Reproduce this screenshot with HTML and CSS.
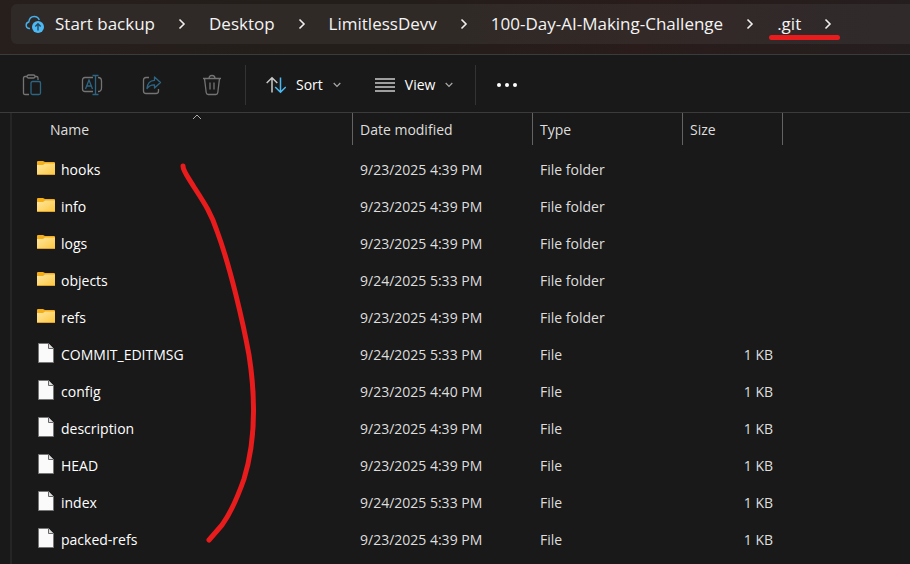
FILE: index.html
```
<!DOCTYPE html>
<html lang="en">
<head>
<meta charset="utf-8">
<title>.git</title>
<link rel="stylesheet" href="styles.css">
</head>
<body>
<svg class="defs" aria-hidden="true">
  <defs>
    <linearGradient id="folder-fill" x1="0" y1="0" x2="1" y2="1">
      <stop offset="0" stop-color="#ffe7a0"/><stop offset="1" stop-color="#fdc73f"/>
    </linearGradient>
    <symbol id="folder" viewBox="0 0 18 14">
      <path d="M0 1Q0 0 1 0H6L8 1H17Q18 1 18 2V13H0Z" fill="#f5ad18"/>
      <path d="M0 4H6L8 2.500H18V13Q18 14 17 14H1Q0 14 0 13Z" fill="url(#folder-fill)"/>
      <path d="M0 13.500H18" stroke="#e0a42c"/>
    </symbol>
    <symbol id="file" viewBox="0 0 16 20">
      <path d="M.5.5H10.500L15.500 5.500V19.500H.5Z" fill="#fafafa" stroke="#777"/>
      <path d="M10.500.5V5.500H15.500" fill="#ddd" stroke="#666"/>
    </symbol>
    <symbol id="chevron" viewBox="0 0 8 12"><path d="M1.500 1.500L6 6L1.500 10.500" fill="none" stroke="#eee" stroke-width="1.600"/></symbol>
    <symbol id="down" viewBox="0 0 8 6"><path d="M.7 1L4 4.300L7.300 1" fill="none" stroke="#aaa" stroke-width="1.200"/></symbol>
  </defs>
</svg>
<header class="address">
  <nav class="path" aria-label="Path">
    <a class="backup" href="#">
      <svg width="20" height="19" viewBox="0 0 20 19" fill="none"><path d="M5 13.500H4A3.300 3.300 0 0 1 3.800 7Q4.500 1.500 9.200 1.500Q13 1.500 14.300 5" stroke="#45b0ee" stroke-width="1.400"/><circle cx="13" cy="12" r="6" fill="#4cb9f4"/><path d="M13 15.500V9M10.300 11.500L13 8.800L15.700 11.500" stroke="#25465a" stroke-width="1.400"/></svg>
      Start backup</a>
    <svg class="chev"><use href="#chevron"/></svg>
    <a href="#">Desktop</a>
    <svg class="chev"><use href="#chevron"/></svg>
    <a href="#">LimitlessDevv</a>
    <svg class="chev"><use href="#chevron"/></svg>
    <a href="#">100-Day-AI-Making-Challenge</a>
    <svg class="chev"><use href="#chevron"/></svg>
    <span class="current"><a href="#">.git</a>
    <svg class="chev"><use href="#chevron"/></svg></span>
  </nav>
</header>
<div class="toolbar" role="toolbar" aria-label="Commands">
  <div class="group actions">
    <button type="button" aria-label="Paste"><svg width="20" height="22" viewBox="0 0 20 22" fill="none" stroke-width="1.300"><path d="M7 20.500H3Q1.500 20.500 1.500 19V4Q1.500 2.500 3 2.500H5M13 2.500H14.500Q16 2.500 16 4V6" stroke="#747474"/><rect x="5" y="1" width="8" height="3" rx="1.500" stroke="#747474"/><rect x="9" y="7.500" width="9.500" height="13" rx="1.500" stroke="#2d6684"/></svg></button>
    <button type="button" aria-label="Rename"><svg width="22" height="22" viewBox="0 0 22 22" fill="none" stroke-width="1.300"><path d="M12 3.500H4Q1.500 3.500 1.500 6V15Q1.500 17.500 4 17.500H12M17 3.500Q20.500 3.500 20.500 7V14Q20.500 17.500 17 17.500" stroke="#747474"/><path d="M4.500 15L8 6L11.500 15M5.700 12H10.300M11.500 1.500H17.500M11.500 20.500H17.500M14.500 1.500V20.500" stroke="#2d6684"/></svg></button>
    <button type="button" aria-label="Share"><svg width="20" height="22" viewBox="0 0 20 22" fill="none" stroke-width="1.300" stroke-linejoin="round"><path d="M7 3.500H4Q1.500 3.500 1.500 6V17Q1.500 19.500 4 19.500H14Q16.500 19.500 16.500 17V15" stroke="#747474"/><path d="M12.500 3L18.500 8.500L12.500 14V10.800Q8 10.500 5 14.500Q5.500 6.700 12.500 6.300Z" stroke="#2d6684"/></svg></button>
    <button type="button" aria-label="Delete"><svg width="20" height="22" viewBox="0 0 20 22" fill="none" stroke="#747474" stroke-width="1.300"><path d="M1 4.500H19M2.500 4.500L4.200 18.500Q4.500 20.500 6.200 20.500H13.800Q15.500 20.500 15.800 18.500L17.500 4.500M7 4.500Q7 1.500 10 1.500Q13 1.500 13 4.500M8 8.500V15.500M12 8.500V15.500"/></svg></button>
  </div>
  <div class="group menus">
    <button type="button"><svg width="20" height="18" viewBox="0 0 20 18" fill="none" stroke-width="1.500"><path d="M6 16.500V2M.7 7L6 1.700L11.300 7" stroke="#c8c8c8"/><path d="M14.500 1.500V16M9.200 11L14.500 16.300L19.800 11" stroke="#4cb9f4"/></svg>Sort<svg class="down"><use href="#down"/></svg></button>
    <button type="button"><svg width="20" height="16" viewBox="0 0 20 16" stroke="#ccc" stroke-width="1.300"><path d="M0 2H20M0 6H20M0 10H20M0 14H20"/></svg>View<svg class="down"><use href="#down"/></svg></button>
  </div>
  <button class="more" type="button" aria-label="See more"><svg width="20" height="6" viewBox="0 0 20 6" fill="#fff"><circle cx="2" cy="3" r="2"/><circle cx="10" cy="3" r="2"/><circle cx="18" cy="3" r="2"/></svg></button>
</div>
<main class="files">
  <table>
    <colgroup><col class="c-name"><col class="c-date"><col class="c-type"><col class="c-size"><col></colgroup>
    <thead><tr>
      <th scope="col" class="name"><div>Name<svg class="sorted" width="10" height="6" viewBox="0 0 10 6"><path d="M1 5L5 1L9 5" fill="none" stroke="#aaa"/></svg></div></th>
      <th scope="col"><div>Date modified</div></th><th scope="col"><div>Type</div></th><th scope="col"><div>Size</div></th><td></td>
    </tr></thead>
    <tbody>
      <tr><td class="name"><span><svg class="folder"><use href="#folder"/></svg>hooks</span></td><td>9/23/2025 4:39 PM</td><td>File folder</td><td></td><td></td></tr>
      <tr><td class="name"><span><svg class="folder"><use href="#folder"/></svg>info</span></td><td>9/23/2025 4:39 PM</td><td>File folder</td><td></td><td></td></tr>
      <tr><td class="name"><span><svg class="folder"><use href="#folder"/></svg>logs</span></td><td>9/23/2025 4:39 PM</td><td>File folder</td><td></td><td></td></tr>
      <tr><td class="name"><span><svg class="folder"><use href="#folder"/></svg>objects</span></td><td>9/24/2025 5:33 PM</td><td>File folder</td><td></td><td></td></tr>
      <tr><td class="name"><span><svg class="folder"><use href="#folder"/></svg>refs</span></td><td>9/23/2025 4:39 PM</td><td>File folder</td><td></td><td></td></tr>
      <tr><td class="name"><span><svg class="file"><use href="#file"/></svg>COMMIT_EDITMSG</span></td><td>9/24/2025 5:33 PM</td><td>File</td><td class="size">1 KB</td><td></td></tr>
      <tr><td class="name"><span><svg class="file"><use href="#file"/></svg>config</span></td><td>9/23/2025 4:40 PM</td><td>File</td><td class="size">1 KB</td><td></td></tr>
      <tr><td class="name"><span><svg class="file"><use href="#file"/></svg>description</span></td><td>9/23/2025 4:39 PM</td><td>File</td><td class="size">1 KB</td><td></td></tr>
      <tr><td class="name"><span><svg class="file"><use href="#file"/></svg>HEAD</span></td><td>9/23/2025 4:39 PM</td><td>File</td><td class="size">1 KB</td><td></td></tr>
      <tr><td class="name"><span><svg class="file"><use href="#file"/></svg>index</span></td><td>9/24/2025 5:33 PM</td><td>File</td><td class="size">1 KB</td><td></td></tr>
      <tr><td class="name"><span><svg class="file"><use href="#file"/></svg>packed-refs</span></td><td>9/23/2025 4:39 PM</td><td>File</td><td class="size">1 KB</td><td></td></tr>
    </tbody>
  </table>
  <svg class="stroke" width="80" height="384" viewBox="180 162 80 384" aria-hidden="true"><path d="M183 166C183 171 188 177 194 187C205 204 211 213 217 231C230 266 243 322 249 355C256 400 256 440 244 479C238 496 230 514 222 525L209 540" fill="none" stroke="#e81c1c" stroke-width="5" stroke-linecap="round" stroke-linejoin="round"/></svg>
</main>
</body>
</html>
```
FILE: styles.css
```
* { box-sizing: border-box; }
body {
  margin: 0;
  min-height: 100vh;
  display: flex;
  flex-direction: column;
  background: #191919;
  color: #fff;
  font: 14px/20px "Segoe UI", "Open Sans", "Noto Sans", sans-serif;
  overflow: hidden;
}
.defs { position: absolute; width: 0; height: 0; }
a { color: inherit; text-decoration: none; }
button { display: flex; align-items: center; padding: 0; border: 0; background: none; color: inherit; font: inherit; }

.address {
  padding: 4px 0 10px 11px;
  border-bottom: 1px solid #3b3b3b;
  background: linear-gradient(100deg, #271f1c, #231e1a 40%, #291c1b 70%, #251e1f);
}
.path {
  display: flex;
  align-items: center;
  gap: 23px;
  height: 40px;
  padding-left: 14px;
  border-radius: 6px 0 0 6px;
  background: linear-gradient(90deg, #2f2a27, #302a27 50%, #332927 70%, #302a2b);
  font-size: 17px;
  line-height: 24px;
  white-space: nowrap;
}
.path a { color: #f4f4f4; }
.backup { display: flex; align-items: center; gap: 10px; }
.chev { flex: none; width: 8px; height: 12px; }
.current { position: relative; display: flex; align-items: center; gap: 23px; }
.current::after {
  content: "";
  position: absolute;
  left: -8px;
  right: -8px;
  bottom: -4px;
  height: 5px;
  border-radius: 3px;
  background: #e81c1c;
}

.toolbar { display: flex; align-items: center; height: 58px; padding-top: 2px; border-bottom: 1px solid #3b3b3b; }
.group { display: flex; align-items: center; height: 40px; border-right: 1px solid #333; }
.actions { gap: 38px; padding: 0 22px 0 21px; }
.actions button { width: 22px; justify-content: center; }
.menus { gap: 34px; padding: 0 22px 0 20px; }
.menus button { gap: 10px; }
.down { width: 8px; height: 6px; }
.more { margin-left: 21px; }

.files { position: relative; flex: 1; margin-left: 10px; border-left: 2px solid #252525; }
table { width: 100%; table-layout: fixed; border-collapse: collapse; }
.c-name { width: 341px; }
.c-date { width: 180px; }
.c-type { width: 150px; }
.c-size { width: 100px; }
th, td { padding: 0 0 0 7px; text-align: left; font-weight: 400; color: #dedede; }
th { padding-bottom: 6px; }
th div { height: 32px; border-right: 1px solid #636363; line-height: 34px; }
th.name { padding-left: 38px; }
.sorted { position: absolute; left: 180px; top: 1px; }
tbody td { height: 37px; }
tbody .name { padding-left: 25px; color: #fff; }
.name span { display: flex; align-items: center; gap: 6px; }
.folder, .file { flex: none; width: 18px; height: 20px; margin-bottom: 3px; }
.folder { height: 14px; }
.size { padding-right: 10px; text-align: right; }
.stroke { position: absolute; left: 168px; top: 49px; }
```
